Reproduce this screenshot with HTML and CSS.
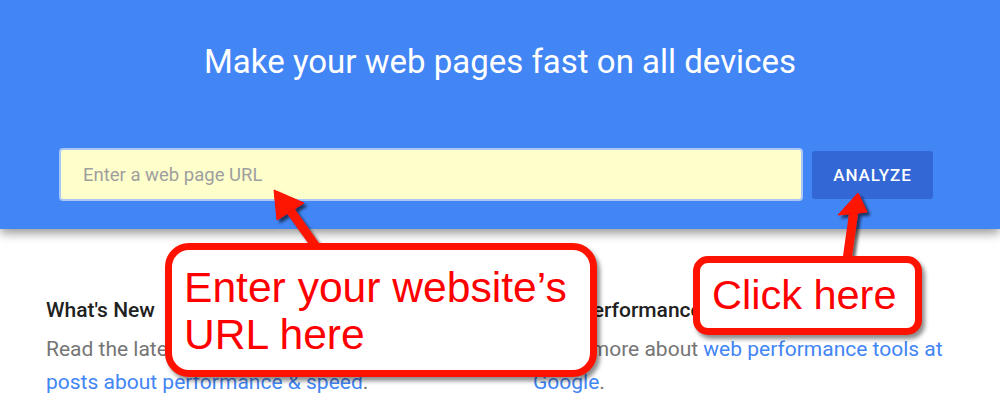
FILE: index.html
```html
<!DOCTYPE html>
<html lang="en">
<head>
<meta charset="utf-8">
<title>PageSpeed Insights</title>
<link rel="stylesheet" href="styles.css">
</head>
<body>
<header class="hero">
  <h1 class="hero-title">Make your web pages fast on all devices</h1>
  <form class="url-form">
    <input class="url-input" type="text" placeholder="Enter a web page URL">
    <button class="analyze-btn" type="button">ANALYZE</button>
  </form>
</header>
<main class="info">
  <section class="info-col">
    <h2 class="info-head">What's New</h2>
    <p class="info-text">Read the latest Google Developers <a class="info-link" href="#">blog posts about performance &amp; speed</a>.</p>
  </section>
  <section class="info-col">
    <h2 class="info-head">Web Performance</h2>
    <p class="info-text">Learn more about <a class="info-link" href="#">web performance tools at Google</a>.</p>
  </section>
</main>

<svg class="arrows" width="1000" height="413" viewBox="0 0 1000 413" aria-hidden="true">
  <defs>
    <filter id="ashadow" x="-20%" y="-20%" width="160%" height="160%">
      <feDropShadow dx="3" dy="3" stdDeviation="1.5" flood-color="#000" flood-opacity="0.6"/>
    </filter>
  </defs>
  <g filter="url(#ashadow)" fill="#ff1200" stroke="#ff1200">
    <line x1="290" y1="210" x2="317" y2="248" stroke-width="9"/>
    <polygon points="274,190 277,220 304,203" stroke-width="1" stroke-linejoin="round"/>
    <line x1="854" y1="210" x2="847" y2="260" stroke-width="9"/>
    <polygon points="858,193 838,215 867,212" stroke-width="1" stroke-linejoin="round"/>
  </g>
</svg>

<div class="callout callout-url">Enter your website’s<br>URL here</div>
<div class="callout callout-click">Click here</div>
</body>
</html>
```
FILE: styles.css
```css
* { box-sizing: border-box; }

html, body {
  margin: 0;
  padding: 0;
  background: #ffffff;
  width: 1000px;
  height: 413px;
  overflow: hidden;
}

body {
  position: relative;
  font-family: Roboto, "Liberation Sans", Arial, sans-serif;
}

.hero {
  position: relative;
  z-index: 1;
  height: 229px;
  background: #4285f4;
  padding-top: 42px;
  box-shadow: 0 4px 10px rgba(0, 0, 0, 0.42);
}

.hero-title {
  margin: 0;
  text-align: center;
  color: #ffffff;
  font-size: 33px;
  line-height: 40px;
  font-weight: 400;
}

.url-form {
  display: flex;
  align-items: center;
  gap: 9px;
  margin: 66px 0 0 59px;
  width: 874px;
}

.url-input {
  flex: 1;
  height: 53px;
  margin: 0;
  border: 2px solid #a9c6f7;
  border-radius: 4px;
  background: #ffffcc;
  padding: 0 0 0 22px;
  font-family: Roboto, "Liberation Sans", Arial, sans-serif;
  font-size: 18.5px;
  color: #333;
  outline: none;
}

.url-input::placeholder {
  color: #9e9e9e;
}

.analyze-btn {
  width: 121px;
  height: 48px;
  margin: 0;
  border: none;
  border-radius: 3px;
  background: #3367d6;
  color: #ffffff;
  font-family: Roboto, "Liberation Sans", Arial, sans-serif;
  font-size: 17px;
  font-weight: 500;
  letter-spacing: 0.9px;
  padding: 0;
}

.info {
  display: grid;
  grid-template-columns: 416px 416px;
  column-gap: 71px;
  padding: 69px 0 0 46px;
}

.info-head {
  margin: 0 0 10px;
  font-size: 21px;
  line-height: 25px;
  font-weight: 500;
  color: #212121;
}

.info-text {
  margin: 0;
  font-size: 21px;
  line-height: 33px;
  color: #757575;
}

.info-link {
  color: #4285f4;
  text-decoration: none;
}

.arrows {
  position: absolute;
  left: 0;
  top: 0;
  z-index: 2;
  pointer-events: none;
}

.callout {
  position: absolute;
  z-index: 3;
  background: #ffffff;
  border: 7px solid #ff1200;
  color: #ff0000;
  font-family: "Liberation Sans", Arial, Helvetica, sans-serif;
  box-shadow: 3px 4px 4px rgba(0, 0, 0, 0.45);
}

.callout-url {
  left: 165px;
  top: 243px;
  width: 432px;
  height: 134px;
  border-radius: 24px;
  padding: 14px 0 0 12px;
  font-size: 42.6px;
  line-height: 47px;
}

.callout-click {
  left: 693px;
  top: 256px;
  width: 229px;
  height: 79px;
  border-radius: 15px;
  padding: 9px 0 0 12px;
  font-size: 41.5px;
  line-height: 46px;
}
```
